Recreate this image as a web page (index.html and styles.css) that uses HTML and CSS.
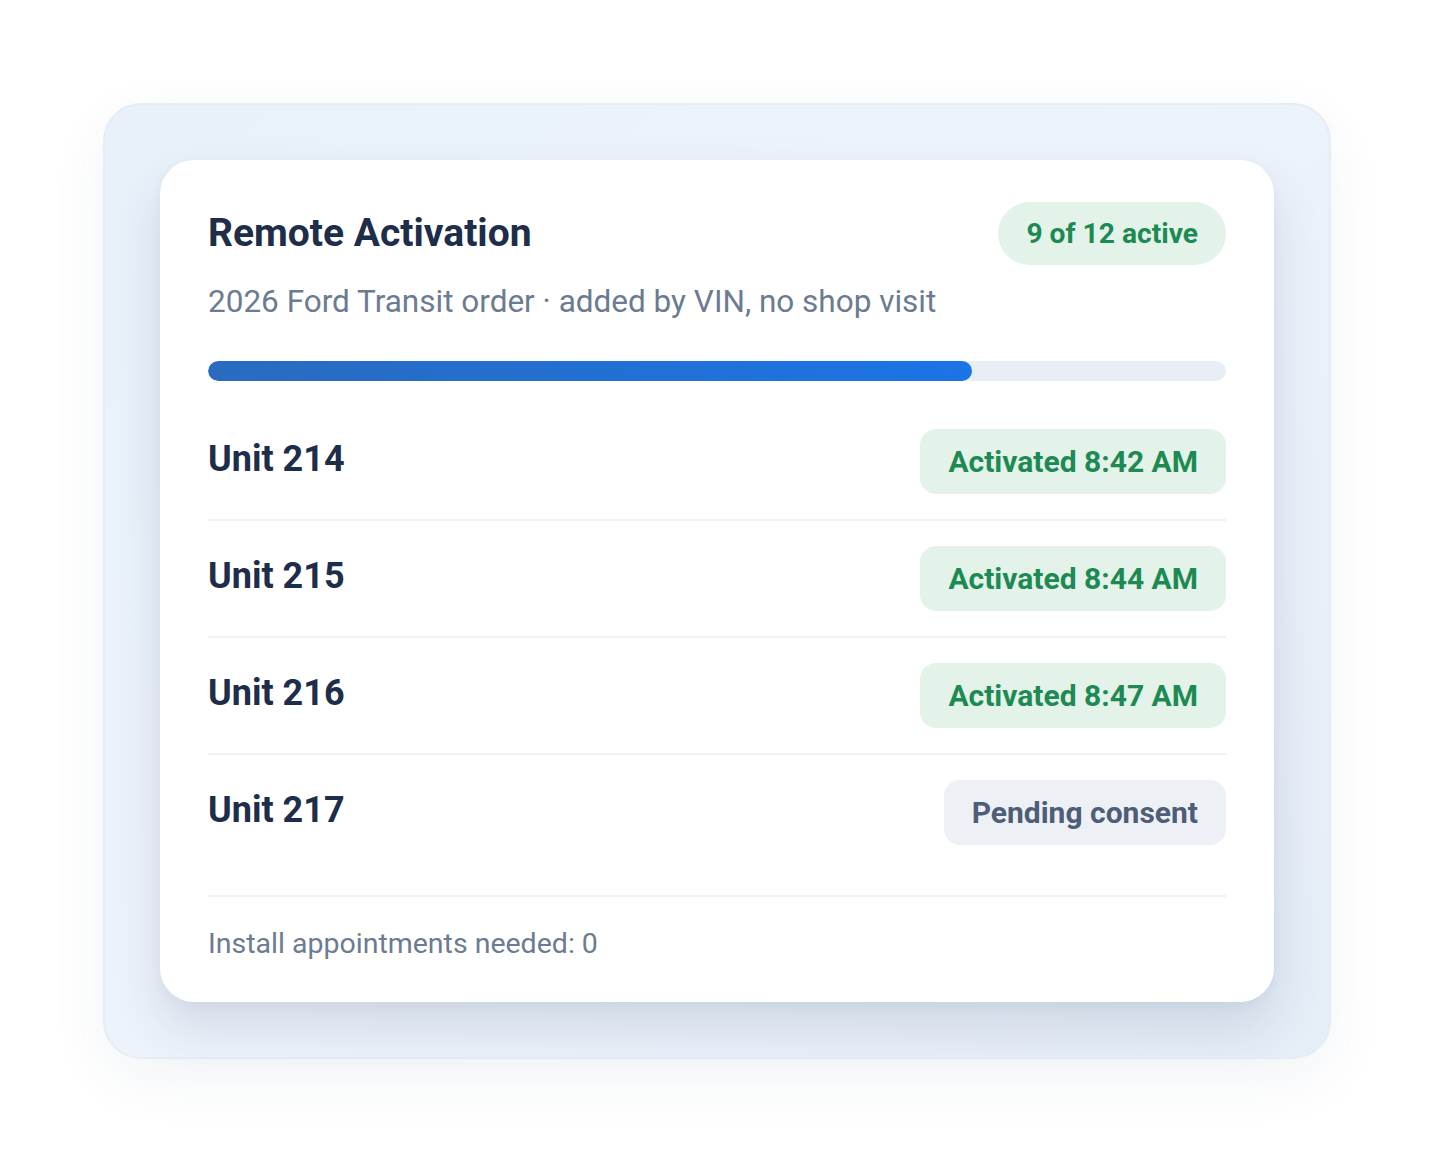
FILE: index.html
```html
<!doctype html>
<html>
<head>
	<meta charset=utf-8>
	<link rel="stylesheet" href="styles.css">
</head>
<body>

<div class=frame>
	<div class=card>

		<div class=head>
			<h1 class=title>Remote Activation</h1>
			<span class=pill>9 of 12 active</span>
		</div>
		<div class=sub>2026 Ford Transit order · added by VIN, no shop visit</div>

		<div class=bar><div class=fill style="width: 75%;"></div></div>

		<div class=units>
			<div class=row>
				<span class=unit>Unit 214</span>
				<span class="tag ok">Activated 8:42 AM</span>
			</div>
			<div class=row>
				<span class=unit>Unit 215</span>
				<span class="tag ok">Activated 8:44 AM</span>
			</div>
			<div class=row>
				<span class=unit>Unit 216</span>
				<span class="tag ok">Activated 8:47 AM</span>
			</div>
			<div class=row>
				<span class=unit>Unit 217</span>
				<span class="tag wait">Pending consent</span>
			</div>
		</div>

		<div class=foot>Install appointments needed: 0</div>

	</div>
</div>

</body>
</html>
```

FILE: styles.css
```css
html { height: 100%; }
body { margin: 0; padding: 0; min-height: 100%; background: #fff; font-family: Roboto, "Liberation Sans", sans-serif; display: flex; align-items: center; justify-content: center; }

.frame { box-sizing: border-box; width: 1228px; height: 956px; padding: 56px; border: 2px solid #e4ecf5; border-radius: 38px; background: linear-gradient(135deg, #e8f1fa 0%, #edf3fb 50%, #e5edf7 100%); box-shadow: 0 20px 60px rgba(40, 70, 120, 0.06); }
.card { box-sizing: border-box; height: 842px; margin: -1px; padding: 42px 48px 0; background: #fff; border-radius: 34px; box-shadow: 0 26px 50px rgba(30, 55, 95, 0.13), 0 4px 12px rgba(30, 55, 95, 0.04); }

.head { display: flex; align-items: center; justify-content: space-between; }
.title { margin: 0; font-size: 39px; line-height: 48px; font-weight: 700; color: #1d2d4a; }
.pill { padding: 0 28px; height: 63px; line-height: 63px; border-radius: 32px; background: #e3f3ea; color: #1d8a53; font-size: 28.2px; font-weight: 700; }
.sub { margin-top: 17px; font-size: 31.5px; line-height: 40px; color: #6b7b92; }

.bar { margin-top: 39px; height: 20px; border-radius: 10px; background: #e8eef5; overflow: hidden; }
.fill { height: 100%; border-radius: 10px; background: linear-gradient(90deg, #2a6bbf, #1b74e6); }

.units { margin-top: 23px; }
.row { display: flex; align-items: center; justify-content: space-between; padding: 25px 0; border-bottom: 2px solid #eef2f6; }
.row:last-child { border-bottom: none; }
.unit { font-size: 36px; line-height: 44px; padding-bottom: 5px; font-weight: 700; color: #1d2d4a; }
.tag { height: 65px; line-height: 65px; padding: 0 28px; border-radius: 16px; font-size: 30px; font-weight: 700; }
.ok { background: #e3f3ea; color: #1d8a53; }
.wait { background: #edf1f5; color: #4f5e78; }

.foot { margin-top: 25px; padding-top: 26px; border-top: 2px solid #eef2f6; font-size: 28.5px; line-height: 42px; color: #6b7b92; }
```
